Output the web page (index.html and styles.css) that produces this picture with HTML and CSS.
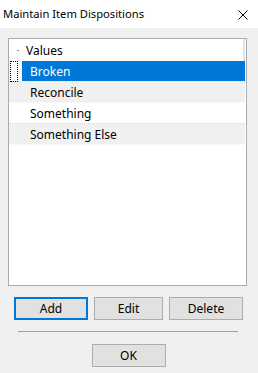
FILE: index.html
```html
<!DOCTYPE html>
<html lang="en">
<head>
    <meta charset="UTF-8">
    <title>Maintain Item Dispositions</title>
    <link rel="stylesheet" href="styles.css">
</head>
<body>
<div class="dialog">
    <div class="title-bar">
        <span class="title">Maintain Item Dispositions</span>
        <svg class="close" width="10" height="10" viewBox="0 0 10 10">
            <path d="M0.5 0.5 L9.5 9.5 M9.5 0.5 L0.5 9.5" stroke="#000" stroke-width="1" fill="none"/>
        </svg>
    </div>
    <div class="grid">
        <div class="grid-head">
            <div class="row-marker"><span class="dash"></span></div>
            <div class="head-cell">Values</div>
        </div>
        <div class="grid-row selected">
            <div class="row-marker"><span class="focus"></span></div>
            <div class="cell">Broken</div>
        </div>
        <div class="grid-row alt">
            <div class="row-marker"></div>
            <div class="cell">Reconcile</div>
        </div>
        <div class="grid-row">
            <div class="row-marker"></div>
            <div class="cell">Something</div>
        </div>
        <div class="grid-row alt">
            <div class="row-marker"></div>
            <div class="cell">Something Else</div>
        </div>
    </div>
    <div class="buttons">
        <button class="btn btn-default">Add</button>
        <button class="btn btn-narrow">Edit</button>
        <button class="btn">Delete</button>
    </div>
    <div class="separator"></div>
    <div class="footer">
        <button class="btn">OK</button>
    </div>
</div>
</body>
</html>
```

FILE: styles.css
```css
*, :after, :before {
    box-sizing: border-box;
}
body {
    margin: 0;
    background: #f0f0f0;
    font-family: "Noto Sans", "Open Sans", Arial, sans-serif;
    font-size: 12px;
    color: #000;
}
.dialog {
    width: 258px;
    height: 373px;
}
.title-bar {
    display: flex;
    justify-content: space-between;
    align-items: center;
    height: 28px;
    padding: 0 10px 0 3px;
    background: #fff;
}
.title {
    font-size: 11.2px;
    padding-bottom: 1px;
}
.close {
    display: block;
    margin-top: 1px;
}
.grid {
    width: 239px;
    height: 248px;
    margin: 10px 0 0 8px;
    border: 1px solid #ababab;
    background: #fff;
}
.grid-head {
    display: flex;
    height: 22px;
}
.grid-row {
    display: flex;
    height: 21px;
    border-bottom: 1px dotted #d4d4d4;
    width: 236px;
}
.grid-row.alt {
    background: #f0f0f0;
    border-bottom-color: #fff;
}
.row-marker {
    position: relative;
    width: 13px;
    flex: none;
}
.grid-row.selected .row-marker {
    background: #fff;
}
.head-cell {
    flex: 1;
    padding: 2px 0 0 4px;
    line-height: 20px;
    border-right: 2px solid #e3e3e3;
    margin-right: 1px;
}
.cell {
    flex: 1;
    padding: 1px 0 0 8px;
    line-height: 19px;
}
.grid-row.selected .cell {
    background: #0078d7;
    color: #fff;
}
.dash {
    position: absolute;
    left: 8px;
    top: 11px;
    width: 2px;
    height: 1px;
    background: #8a8a8a;
}
.focus {
    position: absolute;
    left: 1px;
    top: 0;
    width: 8px;
    height: 21px;
    border: 1px dotted #000;
}
.buttons {
    display: flex;
    gap: 6px;
    margin: 11px 0 0 14px;
}
.btn {
    width: 74px;
    height: 23px;
    padding: 0;
    font-family: inherit;
    font-size: 12px;
    color: #000;
    background: #e1e1e1;
    border: 1px solid #adadad;
}
.btn-narrow {
    width: 69px;
}
.btn-default {
    border: 2px solid #0078d7;
}
.separator {
    width: 220px;
    height: 1px;
    margin: 11px 0 0 18px;
    background: #a0a0a0;
}
.footer {
    display: flex;
    justify-content: center;
    margin-top: 12px;
    padding-right: 1px;
}
```
